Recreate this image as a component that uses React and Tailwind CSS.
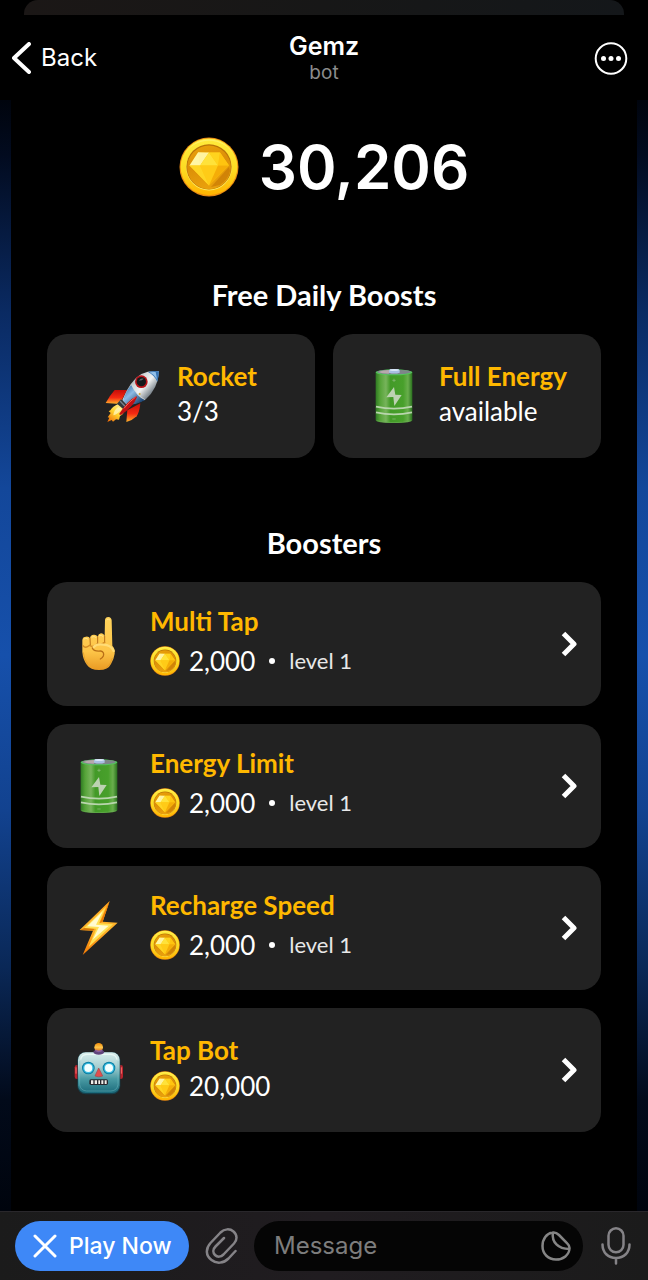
import React from 'react';

const CoinIcon = ({ className }) => (
  <svg viewBox="0 0 60 60" className={className} aria-hidden="true">
    <defs>
      <linearGradient id="coinRim" x1="0" y1="0" x2="0" y2="1">
        <stop offset="0" stopColor="#ffec3d" />
        <stop offset="0.55" stopColor="#fddb22" />
        <stop offset="1" stopColor="#ffb300" />
      </linearGradient>
      <linearGradient id="coinFace" x1="0" y1="0" x2="0.3" y2="1">
        <stop offset="0" stopColor="#eba30b" />
        <stop offset="0.5" stopColor="#dc8f08" />
        <stop offset="1" stopColor="#e9a00c" />
      </linearGradient>
    </defs>
    <circle cx="30" cy="30" r="29.5" fill="#e98a12" />
    <circle cx="30" cy="29.8" r="28.4" fill="url(#coinRim)" />
    <path d="M5 18a28 28 0 0 1 50 0A29 29 0 0 0 5 18z" fill="#fff9a8" opacity="0.4" />
    <circle cx="30" cy="30.6" r="22.8" fill="#ffe95c" />
    <circle cx="30" cy="29.8" r="22.6" fill="#b97407" />
    <circle cx="30" cy="30.4" r="21.8" fill="url(#coinFace)" />
    <path d="M50 30L32 50l9-2a22 22 0 0 0 10-14z" fill="#c87905" opacity="0.7" />
    <path d="M19 15.5h22L50 28.5 30 48.5 10.5 28.5z" fill="#ffc813" />
    <path d="M19 15.5L10.5 28.5H21L27 16z" fill="#fff6a6" />
    <path d="M19 15.5h11L21 28.5z" fill="#fff3a0" />
    <path d="M30 15.5L21 28.5h18z" fill="#ffe23a" />
    <path d="M30 15.5h11l-2 13z" fill="#ffd41e" />
    <path d="M41 15.5l9 13H39z" fill="#ffc40f" />
    <path d="M10.5 28.5H21l9 20z" fill="#ffd524" />
    <path d="M21 28.5h18l-9 20z" fill="#ffcb17" />
    <path d="M39 28.5h11l-20 20z" fill="#f5ad08" />
  </svg>
);

const RocketIcon = () => (
  <svg viewBox="195 145 162 162" className="h-[54px] w-[54px] shrink-0" aria-hidden="true">
    <defs>
      <linearGradient id="rocketBody" x1="260" y1="175" x2="325" y2="235" gradientUnits="userSpaceOnUse">
        <stop offset="0" stopColor="#8a9298" />
        <stop offset="0.35" stopColor="#d5dadc" />
        <stop offset="0.6" stopColor="#f1f3f3" />
        <stop offset="1" stopColor="#66717a" />
      </linearGradient>
      <linearGradient id="rocketBlue" x1="250" y1="195" x2="300" y2="250" gradientUnits="userSpaceOnUse">
        <stop offset="0" stopColor="#285f99" />
        <stop offset="0.45" stopColor="#8dbbe4" />
        <stop offset="1" stopColor="#17406f" />
      </linearGradient>
      <linearGradient id="rocketFin" x1="0" y1="0" x2="0" y2="1">
        <stop offset="0" stopColor="#c50d08" />
        <stop offset="0.55" stopColor="#f52a12" />
        <stop offset="1" stopColor="#ffb52a" />
      </linearGradient>
      <linearGradient id="rocketFlame" x1="245" y1="250" x2="205" y2="303" gradientUnits="userSpaceOnUse">
        <stop offset="0" stopColor="#fff3a0" />
        <stop offset="0.5" stopColor="#ffd22e" />
        <stop offset="1" stopColor="#ef6a08" />
      </linearGradient>
    </defs>
    <path d="M261 208L224 208Q208 226 197 247L239 250z" fill="url(#rocketFin)" />
    <path d="M301 248Q299 272 290 287Q278 299 259 304L262 269Z" fill="url(#rocketFin)" />
    <path d="M236 249Q217 257 211 269L206 272L212 277L203 290L208 291L202 304L215 298L219 303L228 296L237 297L240 286Q254 279 255 261z" fill="url(#rocketFlame)" />
    <path d="M235 259Q222 266 220 284Q235 280 245 265z" fill="#fff8c0" opacity="0.75" />
    <path d="M243 236L231 249L252 267L263 255z" fill="#30383d" />
    <path d="M240 241L257 259" stroke="#78828a" strokeWidth="4" />
    <path d="M357 152Q328 149 304 160Q272 178 247 238L262 254Q292 248 316 237Q354 205 357 152z" fill="url(#rocketBody)" />
    <path d="M274 192Q256 214 249 240L264 254Q292 251 315 238Q291 229 274 192z" fill="url(#rocketBlue)" />
    <path d="M357 152Q338 150 324 154Q342 163 352 183Q357 167 357 152z" fill="#3774b4" />
    <path d="M347 154Q336 153 329 155Q344 163 351 176z" fill="#91c0ea" />
    <path d="M289 227Q263 239 237 281L243 283Q282 256 291 229z" fill="#c01013" />
    <path d="M287 229Q268 243 252 263" stroke="#ff6252" strokeWidth="3" fill="none" />
    <circle cx="304" cy="183" r="19" fill="#b9141a" />
    <circle cx="304" cy="183" r="14" fill="#15191b" />
    <path d="M297 180Q301 171 311 174Q307 180 297 180z" fill="#59636b" />
    <path d="M275 193Q291 226 315 237" stroke="#d6dce0" strokeWidth="2" fill="none" />
    <circle cx="299" cy="220" r="3" fill="#d0a738" />
  </svg>
);

const BatteryIcon = () => (
  <svg viewBox="95 117 162 162" className="h-[54px] w-[54px] shrink-0" aria-hidden="true">
    <defs>
      <linearGradient id="batteryBody" x1="0" y1="0" x2="1" y2="0">
        <stop offset="0" stopColor="#2f7a22" />
        <stop offset="0.12" stopColor="#55a338" />
        <stop offset="0.28" stopColor="#77b45b" />
        <stop offset="0.4" stopColor="#439a28" />
        <stop offset="0.75" stopColor="#48a02b" />
        <stop offset="0.88" stopColor="#69ae4c" />
        <stop offset="1" stopColor="#28701d" />
      </linearGradient>
    </defs>
    <path d="M121 127V270Q121 279 176 279T231 270V127z" fill="url(#batteryBody)" />
    <ellipse cx="176" cy="127" rx="55" ry="9" fill="#52c75c" />
    <ellipse cx="176" cy="126" rx="50" ry="7" fill="#7e8589" />
    <path d="M128 126Q147 119 165 120L160 131Q140 131 128 126z" fill="#b7a9ac" />
    <path d="M161 121Q162 117 177 117T193 121V128Q177 133 161 128z" fill="#a9bfe2" />
    <ellipse cx="177" cy="120" rx="14" ry="3" fill="#d8e5f8" />
    <path d="M122 230Q176 242 230 230M122 247Q176 259 230 247" stroke="#b9d5ad" strokeWidth="5" fill="none" />
    <path d="M176 171L153 202L174 201L177 228L199 195L180 194z" fill="#bdd2b2" />
    <path d="M171 151h10M176 146v10M171 267h10" stroke="#90bd7e" strokeWidth="2" />
    <path d="M124 272Q176 284 228 272" stroke="#69ac55" strokeWidth="2" fill="none" />
  </svg>
);

const FingerIcon = () => (
  <svg viewBox="96 141 162 162" className="h-[54px] w-[54px] shrink-0" aria-hidden="true">
    <defs>
      <linearGradient id="handSkin" x1="0" y1="0" x2="0" y2="1">
        <stop offset="0" stopColor="#ffd35c" />
        <stop offset="0.65" stopColor="#fdc548" />
        <stop offset="1" stopColor="#e99a23" />
      </linearGradient>
    </defs>
    <path d="M195 150Q196 141 205 141Q214 142 215 151L217 227Q226 236 224 251Q222 266 213 282Q205 300 177 300Q151 300 141 285Q129 270 127 246V210Q128 200 138 200Q147 199 150 205Q151 194 161 194Q169 193 173 200Q175 191 183 190Q191 190 194 199z" fill="url(#handSkin)" />
    <path d="M150 205L151 225M173 201L173 221M194 199V218" stroke="#b87019" strokeWidth="3" strokeLinecap="round" />
    <path d="M129 227Q136 237 149 226Q158 234 171 222Q181 226 194 217" stroke="#d28b24" strokeWidth="4" fill="none" strokeLinecap="round" />
    <path d="M161 231Q169 221 190 224Q213 225 221 243" stroke="#ffdc76" strokeWidth="7" fill="none" strokeLinecap="round" />
    <path d="M157 234Q161 245 182 243Q194 246 190 258Q188 263 181 267" stroke="#b96f17" strokeWidth="4" fill="none" strokeLinecap="round" />
    <path d="M132 207Q137 202 144 207M156 201Q162 197 168 202M178 197Q184 193 189 199M201 149Q204 145 209 149" stroke="#ffe58b" strokeWidth="3" fill="none" strokeLinecap="round" />
    <path d="M130 247Q131 267 144 284M217 264Q211 286 199 293" stroke="#dc9323" strokeWidth="3" fill="none" opacity="0.6" />
  </svg>
);

const BoltIcon = () => (
  <svg viewBox="96 124 162 162" className="h-[54px] w-[54px] shrink-0" aria-hidden="true">
    <defs>
      <linearGradient id="boltEdge" x1="0" y1="0" x2="0" y2="1">
        <stop offset="0" stopColor="#ffa11c" />
        <stop offset="0.5" stopColor="#ffb62c" />
        <stop offset="1" stopColor="#f47a05" />
      </linearGradient>
    </defs>
    <path d="M209 124L119 211L159 213L128 286L233 189L188 186z" fill="url(#boltEdge)" />
    <path d="M198 141L133 205L169 207L146 262L219 194L177 191z" fill="#ffe052" />
    <path d="M189 154L142 200L177 202L158 240L206 198L168 195z" fill="#fffbd0" />
    <path d="M209 124L188 186L179 190z" fill="#e97b06" />
    <path d="M119 211L159 213L164 208L133 205z" fill="#d97a08" />
  </svg>
);

const RobotIcon = () => (
  <svg viewBox="96 552 162 162" className="h-[54px] w-[54px] shrink-0" aria-hidden="true">
    <defs>
      <linearGradient id="robotHead" x1="0" y1="0" x2="0" y2="1">
        <stop offset="0" stopColor="#d9efed" />
        <stop offset="0.35" stopColor="#a7cfd1" />
        <stop offset="0.65" stopColor="#4a9ba4" />
        <stop offset="1" stopColor="#1b6b7b" />
      </linearGradient>
      <linearGradient id="robotBulb" x1="0" y1="0" x2="0" y2="1">
        <stop offset="0" stopColor="#f18b09" />
        <stop offset="0.5" stopColor="#ffc64a" />
        <stop offset="1" stopColor="#d96a10" />
      </linearGradient>
    </defs>
    <rect x="104" y="618" width="18" height="42" rx="7" fill="#b8232c" />
    <rect x="231" y="618" width="18" height="42" rx="7" fill="#b8232c" />
    <path d="M108 625v19M244 625v19" stroke="#ff6c6b" strokeWidth="3" />
    <rect x="112" y="579" width="129" height="127" rx="25" fill="#163f4b" />
    <rect x="114" y="580" width="125" height="122" rx="23" fill="url(#robotHead)" />
    <path d="M122 602Q124 587 141 586H212Q229 587 231 602" stroke="#f4fffb" strokeWidth="4" fill="none" opacity="0.7" />
    <path d="M119 606V677Q122 695 140 696H213Q231 695 234 677V606" stroke="#7cc0c7" strokeWidth="2" fill="none" opacity="0.6" />
    <path d="M160 579Q162 572 176 572T193 579Q190 587 176 587T160 579z" fill="#60457c" />
    <circle cx="176" cy="565" r="13" fill="url(#robotBulb)" />
    <path d="M166 574Q176 580 187 574" stroke="#8a609f" strokeWidth="5" fill="none" />
    <circle cx="145" cy="627" r="19" fill="#087fa5" />
    <circle cx="207" cy="627" r="19" fill="#087fa5" />
    <circle cx="145" cy="627" r="16" fill="#3cbce0" />
    <circle cx="207" cy="627" r="16" fill="#3cbce0" />
    <circle cx="145" cy="627" r="12" fill="#f3ffff" />
    <circle cx="207" cy="627" r="12" fill="#f3ffff" />
    <path d="M176 627L165 651Q176 656 188 651z" fill="#e24e4d" stroke="#a94448" strokeWidth="2" />
    <rect x="148" y="661" width="56" height="17" rx="5" fill="#25272d" />
    <path d="M153 664h7v11h-7zM164 664h7v11h-7zM175 664h5v11h-5zM184 664h6v11h-6zM194 664h6v11h-6z" fill="#f0eee9" />
  </svg>
);

const dailyBoosts = [
  { title: 'Rocket', detail: '3/3', Icon: RocketIcon },
  { title: 'Full Energy', detail: 'available', Icon: BatteryIcon },
];

const boosters = [
  { title: 'Multi Tap', price: '2,000', level: 'level 1', Icon: FingerIcon },
  { title: 'Energy Limit', price: '2,000', level: 'level 1', Icon: BatteryIcon },
  { title: 'Recharge Speed', price: '2,000', level: 'level 1', Icon: BoltIcon },
  { title: 'Tap Bot', price: '20,000', Icon: RobotIcon },
];

const Header = () => (
  <header className="bg-black">
    <div className="mx-6 h-[15px] rounded-t-[14px] bg-gradient-to-r from-[#1b1716] via-[#171717] to-[#14171a]" />
    <div className="grid h-[85px] grid-cols-[1fr_auto_1fr] items-center px-3">
      <button type="button" className="flex items-center gap-[10px] justify-self-start text-2xl">
        <svg viewBox="0 0 19 32" className="h-8 w-[19px]" fill="none" stroke="currentColor" strokeWidth="4" strokeLinecap="round" strokeLinejoin="round" aria-hidden="true">
          <path d="M17 2L2 16l15 14" />
        </svg>
        Back
      </button>
      <div className="text-center">
        <h1 className="text-[25px] leading-[30px] font-semibold">Gemz</h1>
        <p className="text-[19px] leading-6 text-[#8c8c8c]">bot</p>
      </div>
      <button type="button" aria-label="More" className="mr-2 justify-self-end">
        <svg viewBox="0 0 34 34" className="h-[34px] w-[34px]" aria-hidden="true">
          <circle cx="17" cy="17.5" r="15.3" fill="none" stroke="currentColor" strokeWidth="2" />
          <circle cx="9.5" cy="17.5" r="2.5" fill="currentColor" />
          <circle cx="17" cy="17.5" r="2.5" fill="currentColor" />
          <circle cx="24.5" cy="17.5" r="2.5" fill="currentColor" />
        </svg>
      </button>
    </div>
  </header>
);

const DailyCard = ({ title, detail, Icon }) => (
  <button type="button" className="flex h-[124px] items-center justify-center gap-[18px] rounded-[20px] bg-[#222222] text-left">
    <Icon />
    <span className="flex flex-col gap-[3px] pb-[6px]">
      <span className="text-[26px] leading-8 font-bold text-[#ffb800]">{title}</span>
      <span className="text-[26px] leading-8">{detail}</span>
    </span>
  </button>
);

const BoosterCard = ({ title, price, level, Icon }) => (
  <li>
    <button type="button" className="flex h-[124px] w-full items-center gap-6 rounded-[20px] bg-[#222222] pr-6 pl-[25px] text-left">
      <Icon />
      <span className={level ? 'flex flex-1 flex-col gap-2 pb-[6px]' : 'flex flex-1 flex-col gap-1 pb-1'}>
        <span className="text-[26px] leading-8 font-bold text-[#ffb800]">{title}</span>
        <span className="flex items-center text-[26px] leading-8">
          <CoinIcon className="mr-[9px] h-[30px] w-[30px]" />
          {price}
          {level && (
            <>
              <span className="mx-[14px] h-[6px] w-[6px] rounded-full bg-white" />
              <span className="text-[22px] text-[#e8e8e8]">{level}</span>
            </>
          )}
        </span>
      </span>
      <svg viewBox="0 0 16 26" className="h-[26px] w-4" fill="none" stroke="currentColor" strokeWidth="5" strokeLinejoin="round" aria-hidden="true">
        <path d="M2.5 2.5L13 13 2.5 23.5" />
      </svg>
    </button>
  </li>
);

const MessageBar = () => (
  <footer className="flex items-center border-t border-[#29272b] bg-gradient-to-r from-[#1b1b1b] via-[#201c20] to-[#1b1b1b] py-[9px] pr-[17px] pl-[15px]">
    <button type="button" className="flex h-[50px] w-[174px] shrink-0 items-center gap-3 rounded-full bg-[#3e88f7] pl-[18px] text-[23px] font-medium">
      <svg viewBox="0 0 24 24" className="h-6 w-6 shrink-0" fill="none" stroke="currentColor" strokeWidth="3" strokeLinecap="round" aria-hidden="true">
        <path d="M2 2l20 20M22 2L2 22" />
      </svg>
      <span className="whitespace-nowrap">Play Now</span>
    </button>
    <button type="button" aria-label="Attach" className="mx-4 text-[#858387]">
      <svg viewBox="0 0 33 36" className="h-9 w-[33px]" fill="none" stroke="currentColor" strokeWidth="2.5" strokeLinecap="round" strokeLinejoin="round" aria-hidden="true">
        <path d="M30.500 23l-7 7.500C18.500 35.500 11.500 36 6.500 32 0.500 27.500 0.500 20.500 5.500 15L15.500 4.500C19.500 0.500 25 0.500 28.500 3.500c4 3.500 3.800 8.500 0.500 12L18.500 26.500c-2.500 2.500-6 3-8.500 0.500-2.500-2.500-2-6 0.500-8.500l8.500-8.500" />
      </svg>
    </button>
    <div className="flex h-[50px] min-w-0 flex-1 items-center rounded-full bg-[#050505] pr-3 pl-5">
      <input type="text" aria-label="Message" placeholder="Message" className="min-w-0 flex-1 bg-transparent text-2xl outline-none placeholder:text-[#7d7d7d]" />
      <button type="button" aria-label="Stickers" className="text-[#858585]">
        <svg viewBox="0 0 30 30" className="h-[30px] w-[30px]" fill="none" stroke="currentColor" strokeWidth="2.5" strokeLinejoin="round" aria-hidden="true">
          <path d="M11.500 1.500C5.500 2.500 1.500 8 1.500 15c0 8 5.800 13.500 13.500 13.500 7.500 0 13-4.500 13.500-11 0.200-2-0.700-3.700-2.300-5.200L18 4c-1.900-1.900-4-3-6.500-2.500z" />
          <path d="M11.800 1.800c-1 9.500 5.200 16.200 16.500 16.200" />
        </svg>
      </button>
    </div>
    <button type="button" aria-label="Record voice message" className="ml-[18px] text-[#858387]">
      <svg viewBox="0 0 30 38" className="h-[38px] w-[30px]" fill="none" stroke="currentColor" strokeWidth="2.5" strokeLinecap="round" aria-hidden="true">
        <rect x="7.500" y="1.300" width="15" height="24" rx="7.500" />
        <path d="M1.500 17.500c0 8 5.500 13.500 13.500 13.500s13.500-5.500 13.500-13.500M15 31v5.500" />
      </svg>
    </button>
  </footer>
);

const App = () => {
  return (
    <div className="flex min-h-screen flex-col bg-black font-['Inter',sans-serif] text-white">
      <Header />

      <main className="flex flex-1 bg-[linear-gradient(#00040d_0%,#020b1f_5%,#0a2a62_19%,#13479a_35%,#1650ab_50%,#12428f_64%,#0a2857_78%,#020a1a_90%,#00040d_100%)] px-[11px]">
        <div className="flex-1 bg-black px-9 pt-[31px] font-['Lato',sans-serif]">
          <div className="flex items-center justify-center gap-5">
            <CoinIcon className="h-[60px] w-[60px]" />
            <span className="font-['Inter',sans-serif] text-[60px] leading-[72px] font-semibold">30,206</span>
          </div>

          {/* Daily boosts */}
          <section className="mt-[74px]">
            <h2 className="mb-[21px] text-center text-[29px] leading-9 font-bold">Free Daily Boosts</h2>
            <div className="grid grid-cols-2 gap-[18px]">
              {dailyBoosts.map((boost) => (
                <DailyCard key={boost.title} {...boost} />
              ))}
            </div>
          </section>

          {/* Boosters */}
          <section className="mt-[67px]">
            <h2 className="mb-[21px] text-center text-[29px] leading-9 font-bold">Boosters</h2>
            <ul className="flex flex-col gap-[18px]">
              {boosters.map((booster) => (
                <BoosterCard key={booster.title} {...booster} />
              ))}
            </ul>
          </section>
        </div>
      </main>

      <MessageBar />
    </div>
  );
};

export default App;
